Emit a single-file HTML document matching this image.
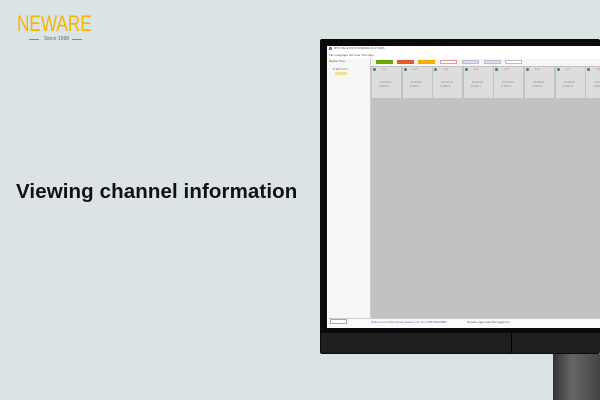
<!DOCTYPE html>
<html><head><style>
*{margin:0;padding:0;box-sizing:border-box}
body{width:600px;height:400px;overflow:hidden;background:#dce3e4;position:relative;font-family:"Liberation Sans",sans-serif}
.a{position:absolute}
.t{font-size:3px;color:#555;white-space:nowrap}
</style></head><body>
<div class="a" style="left:17px;top:12px;font-size:22px;line-height:24px;color:#f4b400;transform:scaleX(0.78);transform-origin:0 0">NEWARE</div>
<div class="a" style="left:29px;top:39px;width:10px;height:1px;background:#888"></div>
<div class="a" style="left:72px;top:39px;width:10px;height:1px;background:#888"></div>
<div class="a" style="left:43px;top:36px;font-size:5px;color:#666;width:27px;text-align:center">Since 1998</div>
<div class="a" style="left:16px;top:180px;font-size:20.5px;font-weight:bold;color:#111;letter-spacing:0.1px">Viewing channel information</div>

<div class="a" style="left:553px;top:354px;width:47px;height:46px;background:linear-gradient(90deg,#333,#666 40%,#444)"></div>
<div class="a" style="left:320px;top:39px;width:280px;height:315px;background:#0a0a0a;border-radius:2px"></div>
<div class="a" style="left:321px;top:333px;width:279px;height:20px;background:#1e1f21"></div>
<div class="a" style="left:511px;top:333px;width:1px;height:20px;background:#000"></div>
<div class="a" style="left:327px;top:46px;width:273px;height:282px;background:#fff"></div>
<div class="a" style="left:329px;top:47px;width:3px;height:3px;background:#3a8ee6"></div>
<div class="a t" style="left:334px;top:46px">BTS Client 8.0.0.540(2020.04.17)(R3)</div>
<div class="a t" style="left:329px;top:53px">File Language Set User Tool Help</div>
<div class="a" style="left:328px;top:59px;width:43px;height:268px;background:#f7f7f7;border-right:1px solid #ccc"></div>
<div class="a t" style="left:329px;top:59px">Device Tree</div>
<div class="a t" style="left:333px;top:67px">▾ 127.0.0.1</div>
<div class="a" style="left:335px;top:72px;width:12px;height:3px;background:#f3e08a"></div>
<div class="a" style="left:371px;top:59px;width:229px;height:7px;background:#f5f5f5"></div>
<div class="a" style="left:376px;top:60px;width:17px;height:4px;background:#6aa600"></div>
<div class="a" style="left:397px;top:60px;width:17px;height:4px;background:#e8592a"></div>
<div class="a" style="left:418px;top:60px;width:17px;height:4px;background:#f4b000"></div>
<div class="a" style="left:440px;top:60px;width:17px;height:4px;border:1px solid #e99;background:#fff"></div>
<div class="a" style="left:462px;top:60px;width:17px;height:4px;background:#dde;border:1px solid #bbc"></div>
<div class="a" style="left:484px;top:60px;width:17px;height:4px;background:#dde;border:1px solid #bbc"></div>
<div class="a" style="left:505px;top:60px;width:17px;height:4px;background:#fff;border:1px solid #bbc"></div>
<div class="a" style="left:371px;top:66px;width:229px;height:253px;background:#c2c2c2"></div>
<div id="ch"></div>
<div class="a" style="left:328px;top:318px;width:272px;height:9px;background:#fafafa;border-top:1px solid #ccc"></div>
<div class="a" style="left:330px;top:319px;width:17px;height:5px;background:#fff;border:1px solid #aaa"></div>
<div class="a t" style="left:371px;top:320px;color:#66a">Welcome to https://www.neware.com.cn/ 0755-83108866</div>
<div class="a t" style="left:467px;top:320px">Neware login.user.Not logged in</div>
<script>
var h='';for(var i=0;i<8;i++){var x=372+i*30.6;
h+='<div class="a" style="left:'+x+'px;top:67px;width:29px;height:31px;background:#ddd"></div>';
h+='<div class="a" style="left:'+(x+1)+'px;top:68px;width:3px;height:3px;border-radius:50%;background:#3a8a3a"></div>';
h+='<div class="a t" style="left:'+(x+10)+'px;top:67px;color:#c66">1-'+(i+1)+'</div>';
h+='<div class="a t" style="left:'+(x+8)+'px;top:80px;color:#888">Finished</div>';
h+='<div class="a t" style="left:'+(x+7)+'px;top:84px;color:#888">0.000 V</div>';}
document.getElementById('ch').innerHTML=h;
</script>
</body></html>
